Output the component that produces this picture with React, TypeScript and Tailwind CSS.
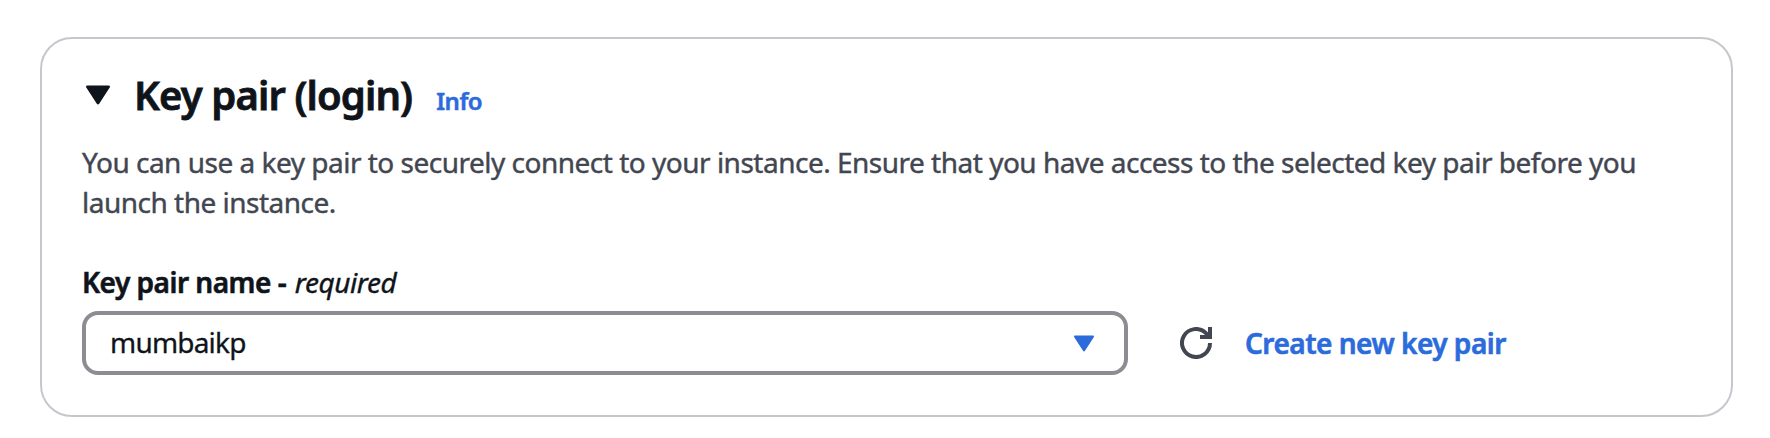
function CaretDown({ className }: { className: string }) {
  return (
    <svg viewBox="0 0 24 20" className={className} fill="currentColor" aria-hidden="true">
      <path d="M1.3 0.4H22.7C23.8 0.4 24.3 1.7 23.7 2.6L13.2 18.8C12.6 19.7 11.4 19.7 10.8 18.8L0.3 2.6C-0.3 1.7 0.2 0.4 1.3 0.4Z" />
    </svg>
  );
}

function RefreshIcon() {
  return (
    <svg viewBox="0 0 32 32" className="h-8 w-8" fill="none" stroke="currentColor" strokeWidth="4" aria-hidden="true">
      <path d="M30 16A14 14 0 1 1 25.9 6.1L29 9.2" />
      <path d="M30 0V10H20" />
    </svg>
  );
}

function SectionHeader() {
  return (
    <header className="flex h-12 items-start">
      <CaretDown className="mt-[14px] ml-1 h-5 w-6 shrink-0" />
      <h2 className="ml-6 text-[40px] leading-[48px] font-semibold tracking-[-0.87px] whitespace-nowrap [-webkit-text-stroke:0.8px]">
        Key pair (login)
      </h2>
      <a className="mt-[13px] ml-6 text-2xl leading-[34px] font-semibold tracking-[-0.5px] text-[#2b6bdb] [-webkit-text-stroke:0.5px]">
        Info
      </a>
    </header>
  );
}

export default function App() {
  return (
    <main className="h-[438px] bg-white pt-[37px] pl-10 font-['Noto_Sans',sans-serif] text-[28px] text-[#0f141a]">
      <section className="h-[380px] w-[1693px] rounded-[32px] border-2 border-[#c6c6cd] px-10 pt-8">
        <SectionHeader />
        <p className="mt-[23px] leading-10 tracking-[-0.5px] text-[#424650] [-webkit-text-stroke:0.4px]">
          You can use a key pair to securely connect to your instance. Ensure that you have access to the selected key
          pair before you launch the instance.
        </p>
        <div className="mt-10 flex leading-10">
          <span className="font-semibold tracking-[-0.5px] [-webkit-text-stroke:0.6px]">Key pair name</span>
          <span className="ml-[7px] font-semibold [-webkit-text-stroke:0.6px]">-</span>
          <i className="ml-2 tracking-[-0.45px] [-webkit-text-stroke:0.4px]">required</i>
        </div>
        <div className="mt-[9px] flex h-16 items-center">
          <button
            type="button"
            className="flex h-16 w-[1046px] items-center justify-between rounded-2xl border-4 border-[#8c8c94] pr-[30px] pl-6"
          >
            <span className="pb-0.5 leading-10 tracking-[-0.8px] [-webkit-text-stroke:0.3px]">mumbaikp</span>
            <CaretDown className="h-[17px] w-5 text-[#2b6bdb]" />
          </button>
          <button type="button" className="ml-[52px] text-[#424650]" aria-label="Refresh">
            <RefreshIcon />
          </button>
          <a className="ml-[33px] pb-px leading-10 font-semibold tracking-[-0.5px] whitespace-nowrap text-[#2b6bdb] [-webkit-text-stroke:0.6px]">
            Create new key pair
          </a>
        </div>
      </section>
    </main>
  );
}
